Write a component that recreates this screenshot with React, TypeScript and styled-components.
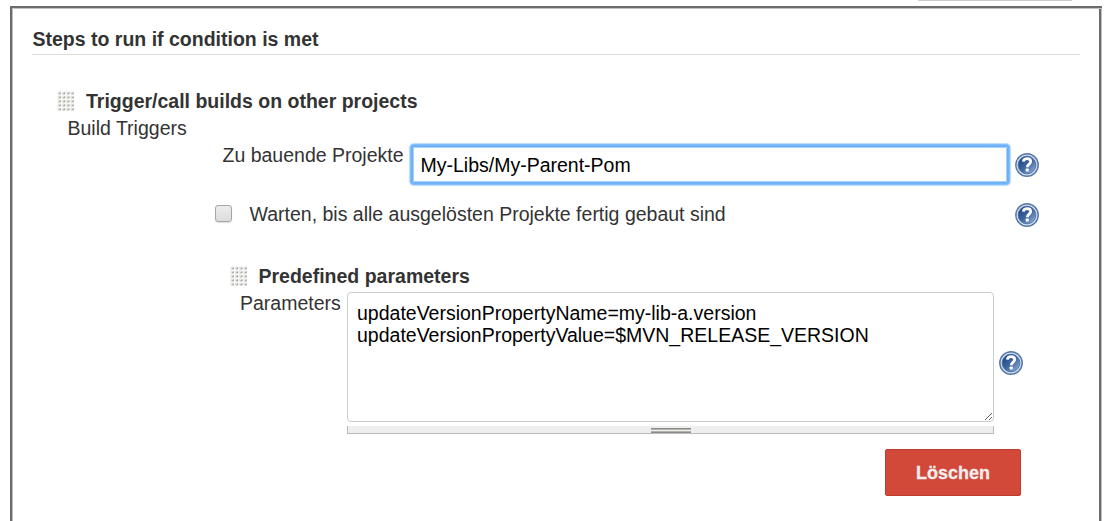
import React from "react";
import styled, { createGlobalStyle } from "styled-components";

const GlobalStyle = createGlobalStyle`
  *, *::before, *::after { box-sizing: border-box; }
  body {
    margin: 0;
    background: #fff;
    color: #333;
    font-family: "Liberation Sans", Helvetica, Arial, sans-serif;
    font-size: 19.5px;
    line-height: 27px;
  }
`;

const Page = styled.main`
  height: 521px;
  overflow: hidden;
  display: flex;
  flex-direction: column;
`;

const PreviousField = styled.div`
  flex: none;
  width: 154px;
  height: 1px;
  margin: 0 0 5px 918px;
  background: #ccc;
`;

const Panel = styled.section`
  flex: none;
  width: 1092px;
  height: 560px;
  margin-left: 10px;
  border: 2px solid #6b6b6b;
  border-right: 0;
  box-shadow: inset 1px 1px 0 #c0c0c0, inset -1px 0 0 #c0c0c0, inset -3px 0 0 #6b6b6b;
  padding: 17px 22px 0 20px;
`;

const Heading = styled.h2`
  margin: 0;
  height: 30px;
  padding: 1px 0 0 0.5px;
  border-bottom: 1px solid #ddd;
  font-size: 19.5px;
  line-height: 27px;
`;

const Row = styled.div<{ $left: number; $top?: number; $height?: number }>`
  display: flex;
  align-items: flex-start;
  height: ${(p) => p.$height ?? 27}px;
  margin-top: ${(p) => p.$top ?? 0}px;
  padding-left: ${(p) => p.$left}px;
`;

const Label = styled.span<{ $width?: number }>`
  flex: none;
  width: ${(p) => (p.$width ? `${p.$width}px` : "auto")};
  white-space: nowrap;
`;

const Title = styled(Label)`
  font-weight: 700;
`;

const Grip = styled.svg`
  flex: none;
  width: 18px;
  height: 20px;
  margin: 3px 11px 0 0;
`;

const ProjectInput = styled.input`
  flex: none;
  width: 596px;
  height: 37px;
  margin: 4px 7px 0 0;
  padding: 2px 8px 0 7.5px;
  border: 1px solid #6fb0f5;
  border-radius: 2px;
  outline: none;
  box-shadow: 0 0 0 1px #6fb3f8, 0 0 0 2px #85bffa, 0 0 1px 3px #b9dafc, inset 0 0 0 1px #a6cffa;
  background: #fff;
  color: #000;
  font: inherit;
`;

const Checkbox = styled.input`
  appearance: none;
  flex: none;
  width: 17px;
  height: 17px;
  margin: 4px 17.5px 0 0;
  border: 1px solid #a6a6a6;
  border-radius: 3px;
  background: linear-gradient(#ececec, #dcdcdc);
  box-shadow: 0 1px 1px #ddd;
`;

const HelpButton = styled.button<{ $top: number; $push?: boolean }>`
  flex: none;
  width: 24px;
  height: 24px;
  margin: ${(p) => p.$top}px ${(p) => (p.$push ? 41 : 0)}px 0 ${(p) => (p.$push ? "auto" : "0")};
  padding: 0;
  border: 0;
  background: none;
  svg { display: block; }
`;

const Editor = styled.div`
  flex: none;
  width: 647px;
  margin: 2px 5px 0 0;
`;

const TextArea = styled.textarea`
  display: block;
  width: 647px;
  height: 130px;
  padding: 9px 9px;
  border: 1px solid #ccc;
  border-radius: 4px;
  outline: none;
  resize: vertical;
  color: #000;
  font: inherit;
  line-height: 22px;
`;

const ResizeBar = styled.div`
  display: flex;
  justify-content: center;
  height: 8px;
  margin-top: 4px;
  padding-top: 2px;
  border: solid #bababa;
  border-width: 0 1px 1px;
  background: #eee;
`;

const ResizeHandle = styled.div`
  width: 40px;
  height: 5px;
  background: linear-gradient(#8c8c88 0 1px, #b2b2ae 1px 2px, #eee 2px 3px, #b2b2ae 3px 4px, #8c8c88 4px);
`;

const DeleteButton = styled.button`
  width: 136px;
  height: 47px;
  padding: 1px 0 0;
  border: 1px solid #bd3d2e;
  border-radius: 2px;
  background: #d24939;
  color: #f0eeee;
  font: inherit;
  font-size: 18px;
  font-weight: 700;
  -webkit-text-stroke: 0.3px #f0eeee;
`;

const gripRows = [0, 4, 8, 12, 16];
const gripColumns = [0, 4.3, 8.6, 12.9];

function DragGrip() {
  return (
    <Grip viewBox="0 0 18 20" aria-hidden="true">
      {gripRows.map((y) =>
        gripColumns.map((x) => (
          <g key={`${x}-${y}`}>
            <rect x={x + 0.5} y={y + 0.5} width="3.5" height="3" fill="#e6e6e3" />
            <path d={`M${x + 1.2} ${y + 3.3}h2.6v-2.3z`} fill="#a3a39e" />
          </g>
        )),
      )}
    </Grip>
  );
}

function Help({ top, push }: { top: number; push?: boolean }) {
  return (
    <HelpButton $top={top} $push={push} aria-label="Hilfe">
      <svg width="24" height="24" viewBox="0 0 24 24">
        <defs>
          <linearGradient id="help-fill" x1="0" y1="0" x2="1" y2="1">
            <stop offset="0.15" stopColor="#244a85" />
            <stop offset="0.5" stopColor="#3d659f" />
            <stop offset="0.9" stopColor="#8aa9d2" />
          </linearGradient>
        </defs>
        <circle cx="12" cy="12" r="11.2" fill="#d5e0ef" stroke="#5878a8" strokeWidth="1.5" />
        <circle cx="12" cy="12" r="8.9" fill="url(#help-fill)" stroke="#466da5" strokeWidth=".8" />
        <path
          d="M8.3 8.6C8.6 6.7 10 5.7 12.1 5.7c2.3 0 3.6 1.2 3.6 2.9 0 2.4-3.3 2.7-3.4 5.6"
          fill="none"
          stroke="#fff"
          strokeWidth="2.8"
        />
        <rect x="10.7" y="15.6" width="3.1" height="2.9" rx=".7" fill="#fff" />
      </svg>
    </HelpButton>
  );
}

const parameters = `updateVersionPropertyName=my-lib-a.version
updateVersionPropertyValue=$MVN_RELEASE_VERSION`;

export default function App() {
  return (
    <Page>
      <GlobalStyle />
      <PreviousField />
      <Panel>
        <Heading>Steps to run if condition is met</Heading>
        <Row $left={25} $top={33}>
          <DragGrip />
          <Title>Trigger/call builds on other projects</Title>
        </Row>
        <Row $left={35.5}>
          <Label>Build Triggers</Label>
        </Row>
        <Row $left={190.5} $height={59}>
          <Label $width={189.5}>Zu bauende Projekte</Label>
          <ProjectInput defaultValue="My-Libs/My-Parent-Pom" spellCheck={false} />
          <Help top={11} />
        </Row>
        <Row $left={183}>
          <Checkbox type="checkbox" id="wait" />
          <Label as="label" htmlFor="wait">Warten, bis alle ausgelösten Projekte fertig gebaut sind</Label>
          <Help top={2} push />
        </Row>
        <Row $left={197.5} $top={35}>
          <DragGrip />
          <Title>Predefined parameters</Title>
        </Row>
        <Row $left={208} $height={159}>
          <Label $width={107}>Parameters</Label>
          <Editor>
            <TextArea defaultValue={parameters} spellCheck={false} />
            <ResizeBar>
              <ResizeHandle />
            </ResizeBar>
          </Editor>
          <Help top={61} />
        </Row>
        <Row $left={853} $height={47}>
          <DeleteButton>Löschen</DeleteButton>
        </Row>
      </Panel>
    </Page>
  );
}
